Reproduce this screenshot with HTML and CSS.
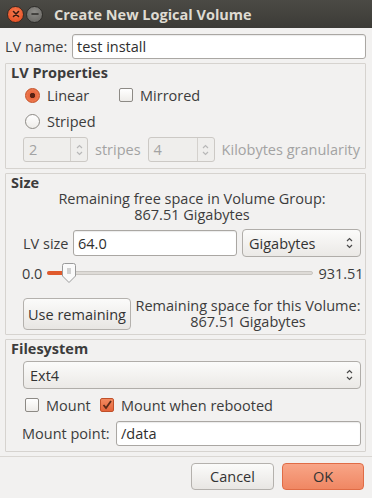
FILE: index.html
```html
<!DOCTYPE html>
<html>
<head>
<meta charset="utf-8">
<link rel="stylesheet" href="styles.css">
</head>
<body>
<div class="window">
  <div class="titlebar">
    <div class="wbtn close"><svg width="8" height="8" viewBox="0 0 8 8"><path d="M1.5 1.5L6.5 6.5M6.5 1.5L1.5 6.5" stroke="#3a1a10" stroke-width="1.6" stroke-linecap="round"/></svg></div>
    <div class="wbtn mini"><svg width="8" height="8" viewBox="0 0 8 8"><path d="M1 4H7" stroke="#2e2d2a" stroke-width="1.6" stroke-linecap="round"/></svg></div>
    <div class="wtitle">Create New Logical Volume</div>
  </div>
  <div class="content">
    <div class="namerow">
      <span class="lbl">LV name:</span>
      <div class="entry grow">test install</div>
    </div>

    <div class="frame props">
      <div class="ftitle">LV Properties</div>
      <div class="optrow">
        <span class="radio on"></span><span class="optlbl linear">Linear</span>
        <span class="check"></span><span class="optlbl">Mirrored</span>
      </div>
      <div class="optrow">
        <span class="radio"></span><span class="optlbl">Striped</span>
      </div>
      <div class="spinrow">
        <div class="spin s1"><span class="sval">2</span><span class="sarr"><svg width="7" height="14" viewBox="0 0 7 14"><path d="M1 5L3.5 2.5L6 5M1 9L3.5 11.5L6 9" fill="none" stroke="#b8b8b8" stroke-width="1.2"/></svg></span></div>
        <span class="dim">stripes</span>
        <div class="spin s2"><span class="sval">4</span><span class="sarr"><svg width="7" height="14" viewBox="0 0 7 14"><path d="M1 5L3.5 2.5L6 5M1 9L3.5 11.5L6 9" fill="none" stroke="#b8b8b8" stroke-width="1.2"/></svg></span></div>
        <span class="dim">Kilobytes granularity</span>
      </div>
    </div>

    <div class="frame size">
      <div class="ftitle">Size</div>
      <div class="center vg"><div>Remaining free space in Volume Group:</div><div>867.51 Gigabytes</div></div>
      <div class="sizerow">
        <span class="lbl">LV size</span>
        <div class="entry szent">64.0</div>
        <div class="combo szcombo"><span>Gigabytes</span><svg width="7" height="14" viewBox="0 0 7 14"><path d="M1 5L3.5 2.5L6 5M1 9L3.5 11.5L6 9" fill="none" stroke="#4a4a4a" stroke-width="1.2"/></svg></div>
      </div>
      <div class="sliderrow">
        <span class="lbl">0.0</span>
        <div class="slider">
          <div class="track"></div>
          <div class="fill"></div>
          <div class="knob"><svg width="14" height="20" viewBox="0 0 14 20"><path d="M2.5 0.5H11.5A2 2 0 0 1 13.5 2.5V13L7 19.5L0.5 13V2.5A2 2 0 0 1 2.5 0.5Z" fill="#fafafa" stroke="#9a9a9a"/><path d="M5 6H9M5 8H9M5 10H9" stroke="#a8a8a8" stroke-width="1"/></svg></div>
        </div>
        <span class="lbl">931.51</span>
      </div>
      <div class="remrow">
        <div class="btn userem">Use remaining</div>
        <div class="center remtxt"><div>Remaining space for this Volume:</div><div>867.51 Gigabytes</div></div>
      </div>
    </div>

    <div class="frame fs">
      <div class="ftitle">Filesystem</div>
      <div class="combo fscombo"><span>Ext4</span><svg width="7" height="14" viewBox="0 0 7 14"><path d="M1 5L3.5 2.5L6 5M1 9L3.5 11.5L6 9" fill="none" stroke="#4a4a4a" stroke-width="1.2"/></svg></div>
      <div class="mountrow">
        <span class="check"></span><span class="optlbl mount">Mount</span>
        <span class="check on"><svg width="12" height="12" viewBox="0 0 12 12"><path d="M2.5 6L5 9L10 2" fill="none" stroke="#5a2a18" stroke-width="1.8"/></svg></span><span class="optlbl">Mount when rebooted</span>
      </div>
      <div class="mprow">
        <span class="lbl">Mount point:</span>
        <div class="entry grow">/data</div>
      </div>
    </div>

    <div class="sep"></div>
    <div class="actions">
      <div class="btn cancel">Cancel</div>
      <div class="btn ok">OK</div>
    </div>
  </div>
</div>
</body>
</html>
```

FILE: styles.css
```css
* { box-sizing: border-box; }
html, body { margin: 0; padding: 0; }
body {
  width: 372px;
  height: 498px;
  overflow: hidden;
  font-family: "Open Sans", "DejaVu Sans", sans-serif;
  font-size: 14.5px;
  color: #3c3c3c;
  background: #f2f1f0;
}
.window { width: 372px; height: 498px; display: flex; flex-direction: column; }
.titlebar {
  height: 28px;
  flex: none;
  background: linear-gradient(#4b4a45, #3c3b37);
  display: flex;
  align-items: center;
  padding-left: 7px;
}
.wbtn {
  width: 17px; height: 17px; border-radius: 50%;
  display: flex; align-items: center; justify-content: center;
  margin-right: 2px;
}
.close { background: radial-gradient(circle at 50% 35%, #f77a4f, #e2481c); border: 1px solid #3a2a22; }
.mini { background: radial-gradient(circle at 50% 35%, #8d8c88, #64635f); border: 1px solid #2e2d2a; }
.wtitle {
  margin-left: 9px;
  color: #dfdbd2;
  font-weight: bold;
  font-size: 14.5px;
}
.content { padding: 6px 6px 0 5px; display: flex; flex-direction: column; }
.namerow { display: flex; align-items: center; height: 25px; }
.namerow .lbl { width: 67px; }
.lbl { white-space: nowrap; }
.entry {
  height: 25px;
  background: #fff;
  border: 1px solid #aaa7a3;
  border-radius: 3px;
  padding: 0 4px;
  display: flex;
  align-items: center;
  color: #2e2e2e;
  box-shadow: inset 0 1px 1px rgba(0,0,0,0.08);
}
.grow { flex: 1; }
.frame {
  border: 1px solid #d6d3cf;
  border-radius: 1px;
  padding: 0 4px 0 0;
  flex: none;
}
.ftitle { font-weight: bold; height: 18px; line-height: 18px; margin-left: 5px; }
.props { margin-top: 4px; height: 106px; }
.optrow { display: flex; align-items: center; height: 26px; padding-left: 19px; }
.radio {
  width: 15px; height: 15px; border-radius: 50%;
  border: 1px solid #8d8a85;
  background: linear-gradient(#fff, #eeece9);
  display: inline-block;
  flex: none;
}
.radio.on {
  border-color: #c54d22;
  background: radial-gradient(circle, #5a2212 0 2.4px, #e9683e 3px, #f0875d 100%);
}
.optlbl { margin-left: 7px; white-space: nowrap; }
.linear { width: 72px; }
.mount { width: 54px; }
.check {
  width: 14px; height: 14px; border-radius: 2px;
  border: 1px solid #8d8a85;
  background: linear-gradient(#fff, #eeece9);
  display: inline-flex; align-items: center; justify-content: center;
  flex: none;
}
.check.on { border-color: #c05029; background: linear-gradient(#f28a60, #e4643a); }
.spinrow { display: flex; align-items: center; height: 25px; margin-top: 3px; padding-left: 17px; color: #a3a3a3; }
.spin {
  height: 25px; border: 1px solid #ccc9c5; border-radius: 3px;
  background: #efeeec;
  display: flex; align-items: center; justify-content: space-between;
  padding-left: 5px;
  flex: none;
}
.s1 { width: 65px; }
.s2 { width: 67px; margin-left: 7px; }
.sarr { border-left: 1px solid #d4d1cd; height: 100%; width: 17px; display: flex; align-items: center; justify-content: center; }
.dim { margin-left: 7px; white-space: nowrap; }
.size { margin-top: 4px; height: 162px; }
.size .ftitle { height: 17px; }
.center { text-align: center; }
.center > div { height: 16px; line-height: 16px; white-space: nowrap; }
.vg { height: 32px; padding-left: 17px; }
.sizerow { display: flex; align-items: center; margin-top: 6px; padding-left: 17px; height: 28px; }
.sizerow .lbl { width: 50px; }
.szent { width: 164px; height: 26px; }
.combo {
  height: 28px;
  border: 1px solid #b0ada9;
  border-radius: 4px;
  background: linear-gradient(#fbfbfa, #ebe9e6);
  display: flex; align-items: center; justify-content: space-between;
  padding: 0 7px 0 6px;
  color: #333;
}
.szcombo { width: 119px; margin-left: 5px; }
.sliderrow { display: flex; align-items: center; padding-left: 16px; height: 20px; margin-top: 6px; }
.slider { position: relative; width: 266px; height: 20px; margin: 0 5px 0 5px; flex: none; }
.track { position: absolute; left: 0; right: 0; top: 8px; height: 4px; border-radius: 2px; background: #dedbd7; border: 1px solid #c9c6c2; }
.fill { position: absolute; left: 0; width: 20px; top: 8px; height: 4px; border-radius: 2px; background: #e05a2c; }
.knob { position: absolute; left: 15px; top: 0; width: 14px; height: 20px; }
.knob svg { display: block; }
.remrow { display: flex; align-items: center; padding-left: 17px; margin-top: 15px; }
.btn {
  border: 1px solid #b4b1ad;
  border-radius: 4px;
  background: linear-gradient(#fbfbfa, #e8e6e3);
  display: flex; align-items: center; justify-content: center;
  color: #333;
  flex: none;
}
.userem { width: 108px; height: 32px; }
.remtxt { flex: 1; padding-left: 4px; }
.fs { margin-top: 4px; height: 113px; }
.fs .ftitle { height: 17px; }
.fscombo { margin: 4px 0 0 17px; height: 28px; }
.mountrow { display: flex; align-items: center; height: 20px; margin-top: 6px; padding-left: 19px; }
.mprow { display: flex; align-items: center; margin-top: 6px; padding-left: 16px; height: 25px; }
.mprow .lbl { width: 94px; }
.sep { height: 1px; background: #dad7d3; margin: 4px -6px 0 -5px; flex: none; }
.actions { display: flex; justify-content: flex-end; padding-top: 6px; padding-right: 2px; }
.cancel { width: 83px; height: 27px; }
.ok {
  width: 82px; height: 27px; margin-left: 8px;
  border-color: #e06c46;
  background: linear-gradient(#f8a587, #f08763);
}
```
